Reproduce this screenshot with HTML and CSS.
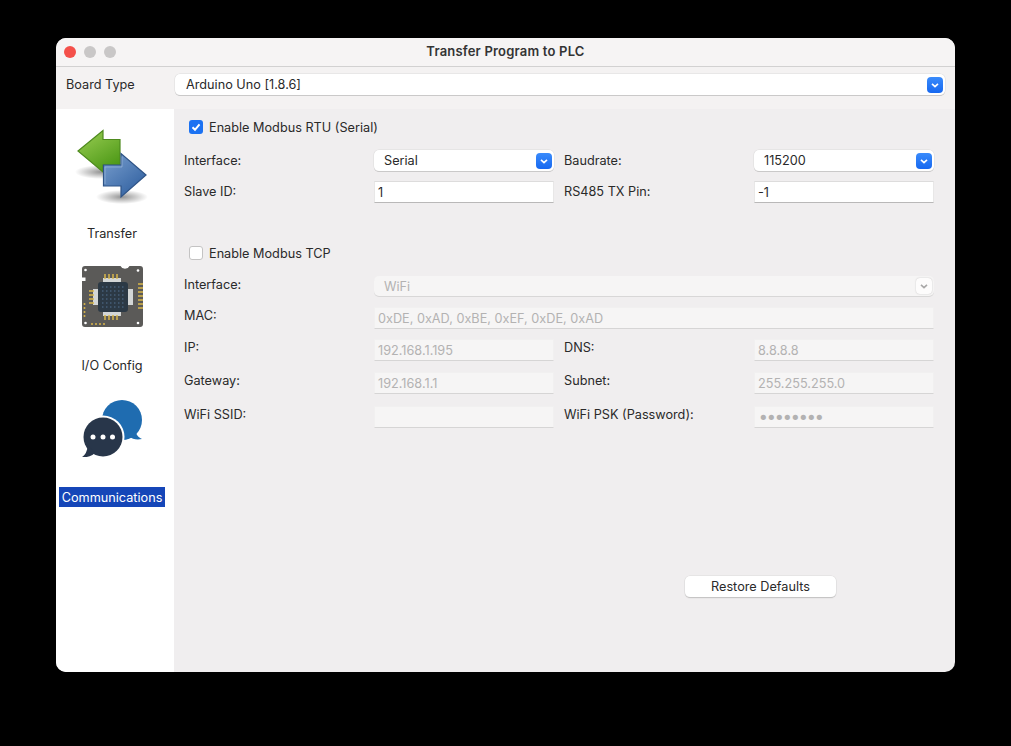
FILE: index.html
```html
<!DOCTYPE html>
<html lang="en">
<head>
    <meta charset="UTF-8">
    <title>Transfer Program to PLC</title>
    <link rel="stylesheet" href="styles.css">
</head>
<body>
    <div class="window">
        <div class="titlebar">
            <div class="lights">
                <span class="light red"></span>
                <span class="light"></span>
                <span class="light"></span>
            </div>
            <div class="title">Transfer Program to PLC</div>
        </div>

        <div class="board-row">
            <div class="board-label">Board Type</div>
            <div class="combo board-combo">
                <span>Arduino Uno [1.8.6]</span>
                <span class="arrow"><svg viewBox="0 0 16 16"><path d="M5 6.800 8 9.600 11 6.800"/></svg></span>
            </div>
        </div>

        <div class="content">
            <div class="sidebar">
                <div class="side-item">
                    <svg class="side-icon" viewBox="56 111 118 112">
                        <defs>
                            <linearGradient id="green" x1="0" y1="0" x2="0.6" y2="1">
                                <stop offset="0" stop-color="#9ccf55"/>
                                <stop offset="1" stop-color="#4f9a18"/>
                            </linearGradient>
                            <linearGradient id="blue" x1="0" y1="0" x2="0.8" y2="1">
                                <stop offset="0" stop-color="#7ba0cf"/>
                                <stop offset="1" stop-color="#2f5f9f"/>
                            </linearGradient>
                            <radialGradient id="shade">
                                <stop offset="0" stop-color="#000" stop-opacity="0.42"/>
                                <stop offset="1" stop-color="#000" stop-opacity="0"/>
                            </radialGradient>
                        </defs>
                        <ellipse cx="101" cy="172" rx="26" ry="7" fill="url(#shade)"/>
                        <ellipse cx="122" cy="197" rx="26" ry="7" fill="url(#shade)"/>
                        <path d="M78 151 103 130.500V139.500H120V165H103V172Z" fill="url(#green)" stroke="#4e8a1e" stroke-width="1.200"/>
                        <path d="M146 175 121 153.500V165H103.500V186H121V197Z" fill="url(#blue)" stroke="#2f5487" stroke-width="1.200"/>
                        <path d="M105 167H122V156.500M105 167V184" fill="none" stroke="#a5c0e0" stroke-opacity="0.6"/>
                    </svg>
                    <div class="side-label">Transfer</div>
                </div>
                <div class="side-item">
                    <svg class="side-icon" viewBox="56 243 118 112">
                        <path d="M85 266H120.500A5 5 0 0 0 129.500 266H140A3 3 0 0 1 143 269V324A3 3 0 0 1 140 327H85A3 3 0 0 1 82 324V281H85.500V277.500H82V269A3 3 0 0 1 85 266Z" fill="#5b5a58"/>
                        <g fill="#fff">
                            <circle cx="85.500" cy="270" r="1.300"/>
                            <circle cx="138" cy="270.500" r="1.300"/>
                            <circle cx="85.500" cy="323" r="1.300"/>
                            <circle cx="138" cy="323" r="1.300"/>
                        </g>
                        <g fill="#d3d6d6">
                            <rect x="103" y="278" width="18" height="5"/>
                            <rect x="103" y="311" width="18" height="5"/>
                            <rect x="93" y="289" width="5" height="16"/>
                            <rect x="128" y="289" width="5" height="16"/>
                        </g>
                        <g stroke="#d9b64a" stroke-width="1.500">
                            <path d="M105 274V279M109 274V279M113 274V279M117 274V279"/>
                            <path d="M105 315V320M109 315V320M113 315V320M117 315V320"/>
                            <path d="M89 291H94M89 295H94M89 299H94M89 303H94"/>
                            <path d="M138 284H143M138 288H143M138 292H143M138 296H143M138 300H143M138 304H143M138 308H143"/>
                        </g>
                        <g fill="#d9b64a">
                            <circle cx="84.500" cy="304" r="1"/>
                            <circle cx="84.500" cy="308" r="1"/>
                            <circle cx="84.500" cy="312" r="1"/>
                            <circle cx="84.500" cy="316" r="1"/>
                            <circle cx="92" cy="324" r="1"/>
                            <circle cx="96" cy="324" r="1"/>
                            <circle cx="100" cy="324" r="1"/>
                            <circle cx="104" cy="324" r="1"/>
                        </g>
                        <rect x="98" y="282" width="30" height="30" rx="3" fill="#2c3945"/>
                        <g fill="none" stroke="#465f78" stroke-width="1.500" stroke-dasharray="1.500 2.500">
                            <path d="M102 287H125M102 291H125M102 295H125M102 299H125M102 303H125M102 307H125"/>
                        </g>
                    </svg>
                    <div class="side-label">I/O Config</div>
                </div>
                <div class="side-item">
                    <svg class="side-icon" viewBox="56 375 118 112">
                        <circle cx="122" cy="420" r="20" fill="#1f6cb0"/>
                        <path d="M132 430 136 433C137 436 139.500 438 142 439 137 440 133 439.500 128 436Z" fill="#1f6cb0"/>
                        <circle cx="103" cy="437" r="21.500" fill="#fff"/>
                        <circle cx="103" cy="437" r="19.500" fill="#28364a"/>
                        <path d="M88 445C87 452 85 455 82 457 86 457.500 91 456.500 95 453Z" fill="#28364a"/>
                        <g fill="#fff">
                            <circle cx="93" cy="437" r="2.500"/>
                            <circle cx="103" cy="437" r="2.500"/>
                            <circle cx="112.500" cy="437" r="2.500"/>
                        </g>
                    </svg>
                    <div class="side-label current">Communications</div>
                </div>
            </div>

            <div class="panel">
                <label class="check-row">
                    <span class="check on"><svg viewBox="0 0 14 14"><path d="M3.500 7.200 6 9.800 10.500 4.300"/></svg></span>
                    Enable Modbus RTU (Serial)
                </label>
                <div class="form-grid rtu">
                    <div class="lbl mid">Interface:</div>
                    <div class="combo"><span>Serial</span><span class="arrow"><svg viewBox="0 0 16 16"><path d="M5 6.800 8 9.600 11 6.800"/></svg></span></div>
                    <div class="lbl mid">Baudrate:</div>
                    <div class="combo"><span>115200</span><span class="arrow"><svg viewBox="0 0 16 16"><path d="M5 6.800 8 9.600 11 6.800"/></svg></span></div>
                    <div class="lbl mid">Slave ID:</div>
                    <div class="field">1</div>
                    <div class="lbl mid">RS485 TX Pin:</div>
                    <div class="field">-1</div>
                </div>

                <label class="check-row tcp">
                    <span class="check"></span>
                    Enable Modbus TCP
                </label>
                <div class="form-grid tcp-grid">
                    <div class="lbl">Interface:</div>
                    <div class="combo off wide"><span>WiFi</span><span class="arrow"><svg viewBox="0 0 16 16"><path d="M5 6.800 8 9.600 11 6.800"/></svg></span></div>
                    <div class="lbl">MAC:</div>
                    <div class="field off wide">0xDE, 0xAD, 0xBE, 0xEF, 0xDE, 0xAD</div>
                    <div class="lbl">IP:</div>
                    <div class="field off">192.168.1.195</div>
                    <div class="lbl">DNS:</div>
                    <div class="field off">8.8.8.8</div>
                    <div class="lbl">Gateway:</div>
                    <div class="field off">192.168.1.1</div>
                    <div class="lbl">Subnet:</div>
                    <div class="field off">255.255.255.0</div>
                    <div class="lbl">WiFi SSID:</div>
                    <div class="field off"></div>
                    <div class="lbl">WiFi PSK (Password):</div>
                    <div class="field off dots">••••••••</div>
                </div>

                <button class="restore">Restore Defaults</button>
            </div>
        </div>
    </div>
</body>
</html>
```

FILE: styles.css
```css
* { box-sizing: border-box; margin: 0; padding: 0; }

body {
    background: #000;
    padding: 38px 56px;
    font-family: 'Inter', 'Liberation Sans', sans-serif;
    font-size: 12.7px;
    color: #2a2a2a;
}

.window {
    width: 899px;
    height: 634px;
    border-radius: 10px;
    overflow: hidden;
    background: #f0eeef;
    display: flex;
    flex-direction: column;
}

.titlebar {
    height: 29px;
    display: flex;
    align-items: center;
    position: relative;
    background: #f6f4f4;
    border-bottom: 1px solid #d2d1d1;
}

.lights {
    display: flex;
    gap: 8px;
    padding-left: 8px;
}

.light {
    width: 12px;
    height: 12px;
    border-radius: 50%;
    background: #c9c7c7;
}

.light.red { background: #f4504a; }

.title {
    position: absolute;
    left: 0;
    right: 0;
    top: 5px;
    text-align: center;
    font-weight: 600;
    font-size: 13px;
    letter-spacing: 0.2px;
    color: #333;
}

.board-row {
    height: 42px;
    display: flex;
    align-items: flex-start;
    padding: 7px 10px 0 10px;
    background: #f4f2f2;
}

.board-label {
    width: 109px;
    line-height: 21px;
}

.content {
    flex: 1;
    display: flex;
}

.sidebar {
    width: 118px;
    background: #fff;
    padding-top: 2px;
}

.side-item {
    height: 132px;
}

.side-icon {
    display: block;
    width: 118px;
    height: 112px;
}

.side-label {
    width: 106px;
    height: 20px;
    margin-left: 3px;
    line-height: 22px;
    text-align: center;
}

.side-label.current {
    background: #1546b8;
    color: #fff;
}

.panel {
    flex: 1;
    padding: 9px 21px 0 10px;
}

.check-row {
    display: flex;
    align-items: center;
    gap: 6px;
    height: 18px;
    padding-left: 5px;
}

.check-row.tcp { margin-top: 41px; }

.check {
    width: 14px;
    height: 14px;
    border-radius: 3px;
    background: #fff;
    border: 1px solid #c4c3c3;
}

.check.on {
    background: #1c72f2;
    border: none;
}

.check svg {
    display: block;
    width: 14px;
    height: 14px;
}

.check path {
    fill: none;
    stroke: #fff;
    stroke-width: 2;
}

.form-grid {
    display: grid;
    grid-template-columns: repeat(4, 180px);
    column-gap: 10px;
}

.rtu {
    margin-top: 14px;
    grid-template-rows: 21px 22px;
    row-gap: 10px;
}

.tcp-grid {
    margin-top: 14px;
    grid-template-rows: 31px 32px 33px 34px 22px;
}

.lbl {
    line-height: 16px;
    padding-top: 1px;
}

.lbl.mid {
    align-self: center;
    padding-top: 0;
}

.wide { grid-column: span 3; }

.combo {
    display: flex;
    align-items: center;
    justify-content: space-between;
    padding: 0 2px 0 10px;
    height: 21px;
    background: #fff;
    border-radius: 5px;
    box-shadow: 0 0 0 0.5px #dcdbdb, 0 1px 0.5px #b8b7b7;
}

.board-combo {
    flex: 1;
    padding-left: 11px;
}

.arrow {
    width: 16px;
    height: 16px;
    border-radius: 4px;
    background: linear-gradient(#3a8bfb, #1768f0);
}

.arrow svg {
    display: block;
    width: 16px;
    height: 16px;
}

.arrow path {
    fill: none;
    stroke: #fff;
    stroke-width: 1.6;
}

.field {
    padding: 0 3px;
    height: 22px;
    width: 179.500px;
    line-height: 21px;
    background: #fff;
    border: 1px solid #e8e7e7;
    border-top-color: #dddcdc;
    border-bottom-color: #b9b8b8;
}

.field.wide { width: 559.500px; }

.field.off {
    background: #f6f5f5;
    color: #b3b2b2;
    border-color: #f1f0f0;
    border-bottom-color: #d6d5d5;
}

.combo.off {
    height: 20px;
    background: #f6f5f5;
    color: #b3b2b2;
    box-shadow: 0 1px 0.5px #d8d7d7;
}

.combo.off .arrow {
    background: #fdfcfc;
    box-shadow: 0 0 1.5px #bdbcbc;
}

.combo.off .arrow path { stroke: #a9a8a8; }

.dots {
    font-family: 'DejaVu Sans', sans-serif;
    font-size: 18px;
    letter-spacing: -2.600px;
}

.restore {
    display: block;
    width: 151px;
    height: 21px;
    margin: 148px 0 0 501px;
    background: #fff;
    border: none;
    border-radius: 5px;
    box-shadow: 0 0 0 0.5px #dcdbdb, 0 1px 1px #a9a8a8;
    font-family: inherit;
    font-size: 12.7px;
    color: #2a2a2a;
}
```
